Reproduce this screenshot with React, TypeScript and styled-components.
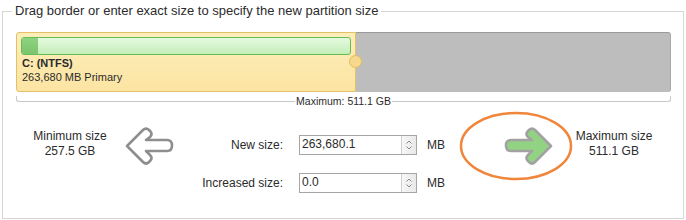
import React from "react";
import styled, { createGlobalStyle } from "styled-components";

const GlobalStyle = createGlobalStyle`
  body {
    margin: 0;
    background: #fff;
    font-family: "Liberation Sans", Arial, sans-serif;
    font-size: 12px;
    color: #2b2b2b;
  }
`;

const Frame = styled.fieldset`
  margin: 4px 2px 0;
  height: 215px;
  box-sizing: border-box;
  border: 1px solid #d6d6d6;
  padding: 14px 12px 0 13px;
  min-width: 0;
`;

const Legend = styled.legend`
  padding: 0 3px;
  margin-left: -4px;
  font-size: 13px;
  line-height: 14px;
`;

const Bar = styled.div`
  position: relative;
  display: flex;
  height: 60px;
`;

const Partition = styled.div`
  width: 340px;
  box-sizing: border-box;
  border: 1px solid #e4c165;
  border-radius: 3px 0 0 3px;
  background: linear-gradient(#fdeeb9, #fce4a3);
  padding: 4px 4px 0;
  font-size: 11px;
`;

const Usage = styled.div`
  display: flex;
  height: 18px;
  box-sizing: border-box;
  border: 1px solid #65bd57;
  border-radius: 3px;
  background: linear-gradient(#e6fae0, #c3eeb7);
  margin-bottom: 1px;
`;

const Used = styled.div<{ $w: number }>`
  width: ${(p) => p.$w}px;
  background: linear-gradient(#8fd281, #7cc46d);
  border-radius: 2px 0 0 2px;
`;

const PartName = styled.div`
  font-weight: bold;
  line-height: 14px;
  padding-left: 1px;
`;

const PartInfo = styled.div`
  line-height: 14px;
  padding-left: 1px;
`;

const Free = styled.div`
  flex: 1;
  background: #bdbdbd;
  border-top: 1px solid #9a9a9a;
  border-right: 1px solid #a9a9a9;
  border-radius: 0 3px 3px 0;
`;

const Handle = styled.div`
  position: absolute;
  left: 333px;
  top: 23px;
  width: 13px;
  height: 13px;
  box-sizing: border-box;
  border-radius: 50%;
  border: 1px solid #e3bb5c;
  background: #f6d98f;
`;

const Scale = styled.div`
  display: flex;
  align-items: flex-start;
  height: 12px;
  margin-top: 4px;
`;

const ScaleArm = styled.div<{ $side: "left" | "right" }>`
  flex: 1;
  height: 5px;
  border-bottom: 1px solid #c8c8c8;
  ${(p) =>
    p.$side === "left"
      ? "border-left: 1px solid #c8c8c8; border-bottom-left-radius: 3px;"
      : "border-right: 1px solid #c8c8c8; border-bottom-right-radius: 3px;"}
`;

const ScaleText = styled.div`
  font-size: 10.5px;
  line-height: 10px;
  padding: 0 1px;
`;

const Controls = styled.div`
  display: grid;
  grid-template-columns: 108px 50px 286px 112px 84px;
  align-items: start;
  margin-top: 18px;
`;

const Limit = styled.div`
  text-align: center;
  line-height: 15px;
  padding-top: 3px;
`;

const ArrowCell = styled.div<{ $pad: number }>`
  position: relative;
  padding-left: ${(p) => p.$pad}px;
`;

const Ring = styled.svg`
  position: absolute;
  left: -1px;
  top: -15px;
`;

const Form = styled.div`
  display: grid;
  grid-template-columns: 109px 134px auto;
  row-gap: 18px;
  align-items: center;
  padding-top: 9px;
`;

const Label = styled.div`
  text-align: right;
`;

const Unit = styled.div`
  padding-left: 10px;
`;

const Spin = styled.div`
  display: flex;
  height: 20px;
  box-sizing: border-box;
  border: 1px solid #a5a5a5;
  margin-left: 16px;
`;

const SpinText = styled.div`
  flex: 1;
  padding-left: 2px;
  line-height: 17px;
`;

const SpinButtons = styled.div`
  width: 14px;
  border-left: 1px solid #d0d0d0;
  background: linear-gradient(90deg, #f6f6f6, #e9e9e9);
  display: flex;
  flex-direction: column;
  align-items: center;
  justify-content: center;
  gap: 2px;
`;

const arrowPath =
  "M3 20 L19 4 Q22 1 25 4 L26 5 Q29 8 26 11 L22 14 L43 14 Q48 14 48 19.5 Q48 25 43 25 L22 25 L26 29 Q29 32 26 35 L25 36 Q22 39 19 36 Z";

function Arrow({ dir }: { dir: "left" | "right" }) {
  const right = dir === "right";
  return (
    <svg width="50" height="41" viewBox="0 0 50 41">
      <path
        d={arrowPath}
        transform={right ? "translate(50 0) scale(-1 1)" : undefined}
        fill={right ? "#92d283" : "#fff"}
        stroke={right ? "#a2a2a2" : "#8e8e8e"}
        strokeWidth="2.6"
        strokeLinejoin="round"
      />
    </svg>
  );
}

function Chevron({ up }: { up: boolean }) {
  return (
    <svg width="6" height="4" viewBox="0 0 6 4">
      <path
        d={up ? "M0.5 3.5 L3 1 L5.5 3.5" : "M0.5 0.5 L3 3 L5.5 0.5"}
        fill="none"
        stroke="#8a8a8a"
        strokeWidth="1"
      />
    </svg>
  );
}

function SpinBox({ value }: { value: string }) {
  return (
    <Spin>
      <SpinText>{value}</SpinText>
      <SpinButtons>
        <Chevron up />
        <Chevron up={false} />
      </SpinButtons>
    </Spin>
  );
}

export default function App() {
  return (
    <>
      <GlobalStyle />
      <Frame>
        <Legend>Drag border or enter exact size to specify the new partition size</Legend>
        <Bar>
          <Partition>
            <Usage>
              <Used $w={16} />
            </Usage>
            <PartName>C: (NTFS)</PartName>
            <PartInfo>263,680 MB Primary</PartInfo>
          </Partition>
          <Free />
          <Handle />
        </Bar>
        <Scale>
          <ScaleArm $side="left" />
          <ScaleText>Maximum: 511.1 GB</ScaleText>
          <ScaleArm $side="right" />
        </Scale>
        <Controls>
          <Limit>
            Minimum size
            <br />
            257.5 GB
          </Limit>
          <ArrowCell $pad={0}>
            <Arrow dir="left" />
          </ArrowCell>
          <Form>
            <Label>New size:</Label>
            <SpinBox value="263,680.1" />
            <Unit>MB</Unit>
            <Label>Increased size:</Label>
            <SpinBox value="0.0" />
            <Unit>MB</Unit>
          </Form>
          <ArrowCell $pad={44}>
            <Ring width="114" height="70" viewBox="0 0 114 70">
              <ellipse cx="57" cy="35" rx="55" ry="33" fill="none" stroke="#f0863b" strokeWidth="2.5" />
            </Ring>
            <Arrow dir="right" />
          </ArrowCell>
          <Limit>
            Maximum size
            <br />
            511.1 GB
          </Limit>
        </Controls>
      </Frame>
    </>
  );
}
